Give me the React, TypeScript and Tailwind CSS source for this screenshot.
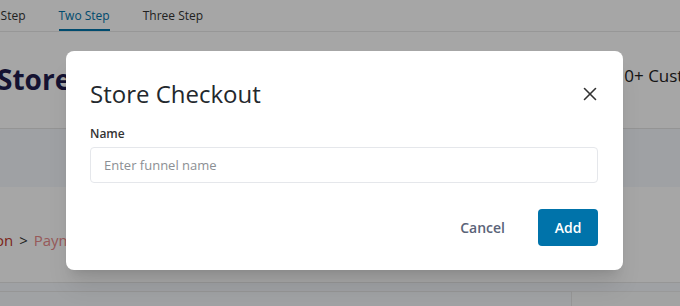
import { X } from 'lucide-react';

const font = { fontFamily: '"Open Sans", "Noto Sans", Arial, sans-serif' };

function BackgroundPage() {
  return (
    <div className="flex h-[306px] w-[680px] flex-col overflow-hidden bg-white">
      {/* step tabs */}
      <div className="flex h-[32px] shrink-0 items-stretch gap-[33px] border-b border-[#e8e8e8] text-[12px] font-medium">
        <div className="-ml-[26px] flex items-center text-[#333]">One Step</div>
        <div className="flex items-center border-b-2 border-[#0073aa] pt-[2px] text-[#0073aa]">Two Step</div>
        <div className="flex items-center text-[#333]">Three Step</div>
      </div>

      {/* header */}
      <div className="flex h-[97px] shrink-0 items-start border-b border-[#e4e4e4]">
        <div className="-ml-[3px] mt-[29px] text-[28px] font-bold leading-[36px] text-[#1f1c4d]">Store</div>
        <div className="ml-auto -mr-[54px] mt-[33px] shrink-0 whitespace-nowrap text-[17px] leading-[22px] text-[#222]">
          10+ Customers
        </div>
      </div>

      {/* tinted strip */}
      <div className="h-[58px] shrink-0 bg-[#f4f8fc]" />

      {/* breadcrumb */}
      <div className="flex h-[96px] shrink-0 items-center border-b border-[#e6e6e6] text-[15px]">
        <div className="-ml-[70px] mt-[12px] flex items-center gap-[6px] whitespace-nowrap">
          <span className="text-[#c0392b]">Information</span>
          <span className="text-[#333]">&gt;</span>
          <span className="text-[#e88a8a]">Payment</span>
        </div>
      </div>

      {/* lower area */}
      <div className="flex flex-1 bg-[#f4f8fc]">
        <div className="ml-[-10px] mt-[8px] h-[60px] w-[582px] border-r border-t border-[#e6e6e6] bg-[#f6f9fc]" />
        <div className="mt-[8px] flex-1 border-t border-[#ececec] bg-[#f9fafb]" />
      </div>
    </div>
  );
}

export default function App() {
  return (
    <div className="relative h-[306px] w-[680px] overflow-hidden" style={font}>
      <BackgroundPage />

      <div className="absolute inset-0 bg-black/35" />

      <div className="absolute left-[66px] top-[51px] w-[557px] rounded-lg bg-white pb-6 pl-6 pr-[25px] pt-[27px] shadow-xl">
        <div className="flex h-[32px] items-center justify-between">
          <h2 className="text-[24px] font-medium leading-[32px] text-[#23282d]">Store Checkout</h2>
          <button type="button" className="-mr-[3px] flex h-[22px] w-[22px] items-center justify-center text-[#333]">
            <X size={22} strokeWidth={1.75} />
          </button>
        </div>

        <label htmlFor="funnel-name" className="mt-[16px] block text-[12px] font-semibold leading-[16px] text-[#333]">
          Name
        </label>
        <input
          id="funnel-name"
          type="text"
          placeholder="Enter funnel name"
          className="mt-[5px] h-[36px] w-full rounded border border-[#e5e7eb] px-[13px] text-[13px] text-[#333] outline-none placeholder:text-[#8c8f94]"
        />

        <div className="mt-[26px] flex items-center justify-end gap-[33px]">
          <button type="button" className="text-[14px] font-semibold text-[#5a6378]">
            Cancel
          </button>
          <button
            type="button"
            className="h-[37px] w-[60px] rounded bg-[#0073aa] text-[14px] font-semibold text-white"
          >
            Add
          </button>
        </div>
      </div>
    </div>
  );
}
